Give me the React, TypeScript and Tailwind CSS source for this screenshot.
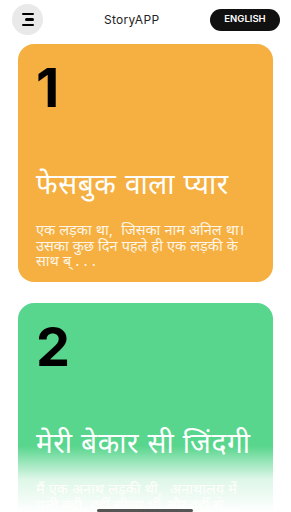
const stories = [
  {
    id: 1,
    title: "फेसबुक वाला प्यार",
    desc: "एक लड़का था,\u00a0 जिसका नाम अनिल था। उसका कुछ दिन पहले ही एक लड़की के साथ ब् . . .",
    bg: "bg-[#f5b041]",
  },
  {
    id: 2,
    title: "मेरी बेकार सी जिंदगी",
    desc: "मैं एक अनाथ लड़की थी,\u00a0 अनाथालय में पली बढ़ी, वहीं सीखा भी और वहीं से . . .",
    bg: "bg-[#58d68d]",
  },
];

function MenuButton() {
  return (
    <button className="flex h-[31px] w-[31px] flex-col items-center justify-center gap-[3px] rounded-full bg-[#e9e9e9]">
      <span className="block h-[2.5px] w-[12px] rounded bg-black" />
      <span className="ml-[3px] block h-[2.5px] w-[9px] rounded bg-black" />
      <span className="block h-[2.5px] w-[12px] rounded bg-black" />
    </button>
  );
}

export default function App() {
  return (
    <div
      className="relative h-[512px] w-[291px] overflow-hidden bg-white"
      style={{ fontFamily: "Inter, 'Noto Sans', sans-serif" }}
    >
      <header className="flex items-center pl-[12px] pr-[11px] pt-[4px]">
        <MenuButton />
        <div className="ml-[61px] text-[12px] font-normal tracking-[0.3px] text-[#222]">
          StoryAPP
        </div>
        <button className="ml-auto h-[22px] w-[70px] rounded-full bg-[#111] text-[9.5px] font-semibold text-white">
          ENGLISH
        </button>
      </header>

      <div className="mt-[9px] flex flex-col gap-[21px] px-[18px]">
        {stories.map((s) => (
          <div
            key={s.id}
            className={`flex h-[238px] flex-col rounded-[16px] ${s.bg} px-[18px] pt-[14px]`}
          >
            <div className="text-[54px] font-bold leading-[60px] text-black">
              {s.id}
            </div>
            <div className="mt-[50px] whitespace-nowrap text-[28px] font-normal leading-[32px] tracking-[0.6px] text-white">
              {s.title}
            </div>
            <p className="mt-[22px] pr-[8px] text-[14.5px] font-normal leading-[15.5px] text-[#fff5e6]">
              {s.desc}
            </p>
          </div>
        ))}
      </div>

      <div className="pointer-events-none absolute bottom-0 left-0 h-[66px] w-full bg-gradient-to-b from-white/0 via-white/80 to-white" />
      <div className="absolute bottom-0 left-[97px] h-[3px] w-[96px] rounded-full bg-[#555]" />
    </div>
  );
}
